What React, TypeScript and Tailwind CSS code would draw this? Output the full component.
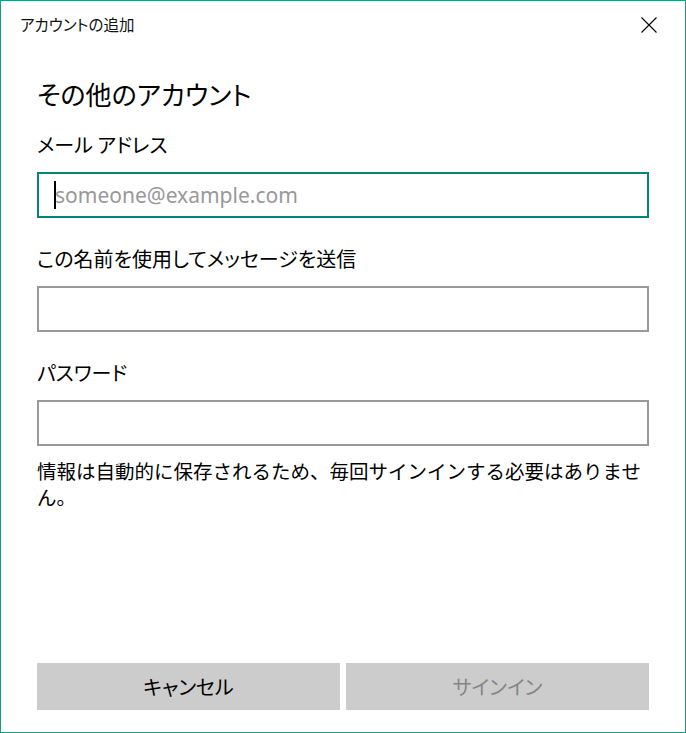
import React from "react";

const jp = "[font-family:'Noto_Sans_CJK_JP',sans-serif] [font-feature-settings:'palt']";

function Field({ label, active, placeholder }: { label: string; active?: boolean; placeholder?: string }) {
  return (
    <>
      <label className="mt-[27px] block h-[28px] text-[20px] leading-[28px] text-black first:mt-[20px]">{label}</label>
      <div
        className={
          "mt-[13px] flex h-[46px] items-center border-2 px-[16px] " +
          (active ? "border-[#018574]" : "border-[#999999]")
        }
      >
        {active && <span className="-ml-[1px] h-[28px] w-[2px] bg-black" />}
        {placeholder && (
          <span className="-ml-[1px] text-[21px] leading-none text-[#999999] [font-family:'Noto_Sans',sans-serif]">
            {placeholder}
          </span>
        )}
      </div>
    </>
  );
}

export default function App() {
  return (
    <div className={`flex h-[733px] w-[686px] flex-col border border-[#1a9b82] bg-white ${jp}`}>
      {/* Title bar */}
      <div className="flex h-[47px] shrink-0 items-center justify-between pl-[19px] pr-[28px]">
        <span className="text-[15.5px] text-[#111]">アカウントの追加</span>
        <svg width="16" height="16" viewBox="0 0 16 16" className="text-black">
          <path d="M0.5 0.5 L15.5 15.5 M15.5 0.5 L0.5 15.5" stroke="currentColor" strokeWidth="1.1" fill="none" />
        </svg>
      </div>

      <div className="flex flex-1 flex-col px-[36px]">
        <h1 className="mt-[29px] h-[34px] text-[26px] leading-[34px] font-normal text-black">その他のアカウント</h1>

        <div className="flex flex-col">
          <Field label="メール アドレス" active placeholder="someone@example.com" />
          <Field label="この名前を使用してメッセージを送信" />
          <Field label="パスワード" />
        </div>

        <p className="mt-[12px] text-[19.5px] leading-[26px] text-black [font-feature-settings:normal]">
          情報は自動的に保存されるため、毎回サインインする必要はありません。
        </p>

        <div className="mt-auto mb-[22px] grid grid-cols-2 gap-[6px]">
          <button className="h-[47px] bg-[#cccccc] text-[20px] text-black">キャンセル</button>
          <button className="h-[47px] bg-[#cccccc] text-[20px] text-[#858585]" disabled>
            サインイン
          </button>
        </div>
      </div>
    </div>
  );
}
